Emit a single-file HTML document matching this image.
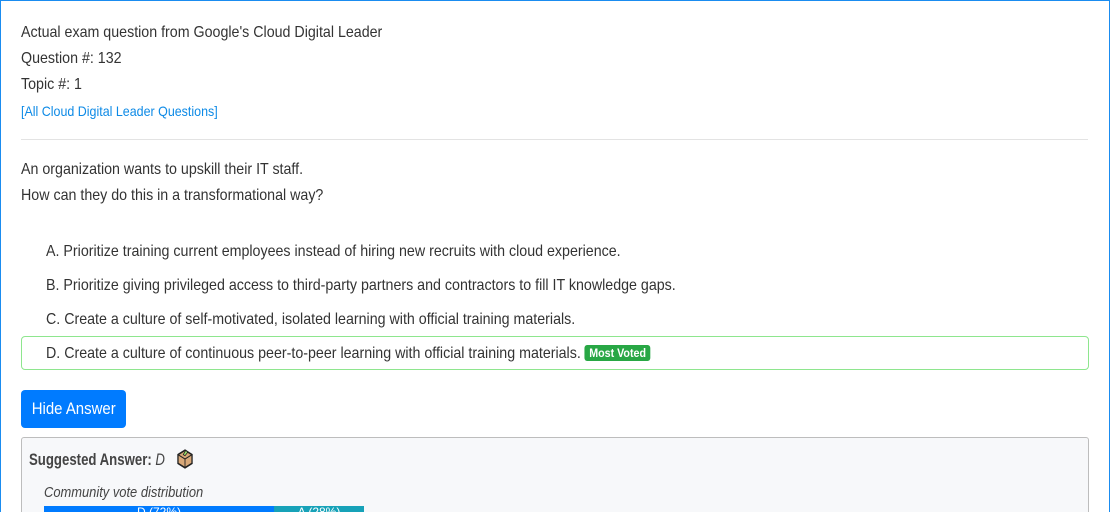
<!DOCTYPE html>
<html><head><meta charset="utf-8"><style>
*{margin:0;padding:0;box-sizing:border-box}
html,body{width:1110px;height:512px;overflow:hidden;background:#fff}
body{font-family:"Liberation Sans",sans-serif;color:#333;font-size:16px;position:relative}
.frame{position:absolute;left:0;top:0;width:1110px;height:530px;border:1px solid #1a8cf0;border-bottom:none}
.t,.opt{position:absolute;left:21px;white-space:nowrap;line-height:20px;transform:scaleX(0.89);transform-origin:0 0}
.opt{left:46px}
a{color:#0d8ae6;text-decoration:none}
.hr{position:absolute;left:21px;top:139px;width:1067px;height:1px;background:#e3e3e3}
.dbox{position:absolute;left:21px;top:336px;width:1068px;height:34px;border:1px solid #8ee68e;border-radius:4px}
.badge{display:inline-block;background:#28a745;color:#fff;font-size:12px;font-weight:bold;padding:0 5px;border-radius:3px;line-height:16px;vertical-align:1px}
.btn{position:absolute;left:21px;top:390px;width:105px;height:38px;background:#007bff;border-radius:4px;color:#fff;font-size:17px;line-height:38px;text-align:center}
.btn span{display:inline-block;transform:scaleX(0.88)}
.sug{position:absolute;left:21px;top:437px;width:1068px;height:100px;background:#f7f8fa;border:1px solid #bdbdbd;border-radius:3px}
.bar{position:absolute;top:506px;height:14px;color:#fff;font-size:12px;text-align:center;line-height:12px}
</style></head><body>
<div class="frame"></div>
<div class="t" style="top:23px">Actual exam question from Google's Cloud Digital Leader</div>
<div class="t" style="top:49px">Question #: 132</div>
<div class="t" style="top:75px">Topic #: 1</div>
<div class="t" style="top:101px;font-size:14px"><a>[All Cloud Digital Leader Questions]</a></div>
<div class="hr"></div>
<div class="t" style="top:160px">An organization wants to upskill their IT staff.</div>
<div class="t" style="top:186px">How can they do this in a transformational way?</div>
<div class="opt" style="top:242px">A. Prioritize training current employees instead of hiring new recruits with cloud experience.</div>
<div class="opt" style="top:276px">B. Prioritize giving privileged access to third-party partners and contractors to fill IT knowledge gaps.</div>
<div class="opt" style="top:310px">C. Create a culture of self-motivated, isolated learning with official training materials.</div>
<div class="dbox"></div>
<div class="opt" style="top:344px">D. Create a culture of continuous peer-to-peer learning with official training materials. <span class="badge">Most Voted</span></div>
<div class="btn"><span>Hide Answer</span></div>
<div class="sug"></div>
<div class="t" style="top:448px;left:29px;font-size:16.5px;font-weight:bold;color:#444;transform:scaleX(0.8)">Suggested Answer: <i style="font-weight:normal">D</i>
<svg width="24" height="22" viewBox="0 0 20 20" style="vertical-align:-5px;margin-left:8px"><path d="M10 2 L18 6 L18 14 L10 18 L2 14 L2 6 Z" fill="#d8a878" stroke="#222" stroke-width="1.5"/><path d="M2 6 L10 10 L18 6 M10 10 L10 18" fill="none" stroke="#222" stroke-width="1"/><path d="M8 6 L11 2 L13 4 L10 7Z" fill="#9be36b" stroke="#222" stroke-width=".8"/></svg></div>
<div class="t" style="top:483px;left:44px;font-size:14.5px;font-style:italic;color:#444">Community vote distribution</div>
<div class="bar" style="left:44px;width:230px;background:#007bff">D (72%)</div>
<div class="bar" style="left:274px;width:90px;background:#17a2b8">A (28%)</div>
</body></html>
